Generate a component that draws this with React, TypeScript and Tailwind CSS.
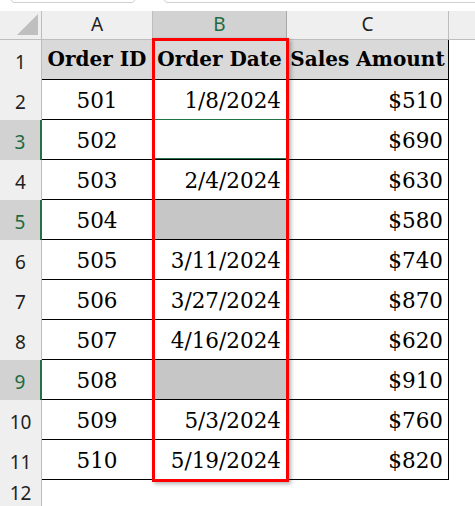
import React from 'react';

type Row = { n: number; id: string; date: string; amount: string; selected?: boolean };

const rows: Row[] = [
  { n: 2, id: '501', date: '1/8/2024', amount: '$510' },
  { n: 3, id: '502', date: '', amount: '$690', selected: true },
  { n: 4, id: '503', date: '2/4/2024', amount: '$630' },
  { n: 5, id: '504', date: '', amount: '$580', selected: true },
  { n: 6, id: '505', date: '3/11/2024', amount: '$740' },
  { n: 7, id: '506', date: '3/27/2024', amount: '$870' },
  { n: 8, id: '507', date: '4/16/2024', amount: '$620' },
  { n: 9, id: '508', date: '', amount: '$910', selected: true },
  { n: 10, id: '509', date: '5/3/2024', amount: '$760' },
  { n: 11, id: '510', date: '5/19/2024', amount: '$820' },
];

const serif = "font-['DejaVu_Serif',serif] text-[21.5px] leading-none text-black";
const serifBold = "font-['DejaVu_Serif',serif] text-[20px] leading-none font-bold text-black";
const sans = "font-['Noto_Sans',sans-serif] text-[19px] leading-none";

function RowHead({ n, selected, last }: { n: number; selected?: boolean; last?: boolean }) {
  return (
    <div
      className={`flex ${last ? 'h-[26px] items-start pt-[4px]' : 'h-[40px] items-end pb-[8px]'} justify-center ${sans} ${
        selected
          ? 'bg-[#d2d2d2] text-[#1e6b41] border-r-2 border-r-[#217346]'
          : 'bg-[#efefef] text-[#1f1f1f] border-r border-r-[#bdbdbd]'
      }`}
    >
      {n}
    </div>
  );
}

export default function App() {
  return (
    <div className="w-[475px] h-[506px] overflow-hidden bg-white">
      {/* formula bar remnants */}
      <div className="relative h-[11px] bg-white">
        <div className="absolute left-[10px] top-[-20px] h-[23px] w-[126px] rounded-[5px] border border-[#d0d0d0]"></div>
        <div className="absolute left-[163px] top-[-20px] h-[23px] w-[330px] rounded-[5px] border border-[#d0d0d0]"></div>
      </div>

      <div className="relative">
        <div className="grid grid-cols-[42px_111px_134px_162px_1fr]">
          {/* column headers */}
          <div className="relative h-[29px] bg-[#efefef] border-r border-b border-[#bdbdbd]">
            <div className="absolute left-[17px] top-[3px] h-0 w-0 border-l-[21px] border-l-transparent border-b-[21px] border-b-[#bfbfbf]"></div>
          </div>
          <div className={`flex h-[29px] items-end pb-[5px] justify-center bg-[#efefef] border-r border-b border-[#bdbdbd] text-[#1f1f1f] ${sans}`}>A</div>
          <div className={`flex h-[29px] items-end pb-[5px] justify-center bg-[#d2d2d2] border-r border-b border-[#a8a8a8] text-[#1e6b41] ${sans}`}>B</div>
          <div className={`flex h-[29px] items-end pb-[5px] justify-center bg-[#efefef] border-r border-b border-[#bdbdbd] text-[#1f1f1f] ${sans}`}>C</div>
          <div className="h-[29px] bg-[#efefef] border-b border-[#bdbdbd]"></div>

          {/* row 1 headings */}
          <RowHead n={1} />
          <div className={`flex h-[40px] items-end justify-center pb-[10px] bg-[#d9d9d9] border-b border-r border-black ${serifBold}`}>Order ID</div>
          <div className={`flex h-[40px] items-end justify-center pb-[10px] bg-[#d9d9d9] border-b border-r border-black ${serifBold}`}>Order Date</div>
          <div className={`flex h-[40px] items-end justify-center pb-[10px] bg-[#d9d9d9] border-b border-r border-black ${serifBold}`}>Sales Amount</div>
          <div className="h-[40px]"></div>

          {rows.map((r) => (
            <React.Fragment key={r.n}>
              <RowHead n={r.n} selected={r.selected} />
              <div className={`flex h-[40px] items-end justify-center pb-[8px] border-b border-r border-black ${serif}`}>{r.id}</div>
              {r.n === 3 ? (
                <div className="h-[40px] border-b border-r border-black bg-white">
                  <div className="h-full w-full border-b border-[#217346]"></div>
                </div>
              ) : (
                <div
                  className={`flex h-[40px] items-end justify-end pr-[5px] pb-[8px] border-b border-r ${
                    r.n === 2 ? 'border-b-[#217346] border-r-black' : 'border-black'
                  } ${serif} ${r.selected ? 'bg-[#c6c6c6]' : 'bg-white'}`}
                >
                  {r.date}
                </div>
              )}
              <div className={`flex h-[40px] items-end justify-end pr-[5px] pb-[8px] border-b border-r border-black ${serif}`}>{r.amount}</div>
              <div className="h-[40px]"></div>
            </React.Fragment>
          ))}

          <RowHead n={12} last />
          <div className="h-[26px]"></div>
          <div className="h-[26px]"></div>
          <div className="h-[26px]"></div>
          <div className="h-[26px]"></div>
        </div>

        {/* highlight box over column B */}
        <div className="pointer-events-none absolute left-[152px] top-[27px] h-[444px] w-[137px] border-[3px] border-[#ff0000] shadow-[2px_2px_4px_rgba(0,0,0,0.3)]"></div>
      </div>
    </div>
  );
}
